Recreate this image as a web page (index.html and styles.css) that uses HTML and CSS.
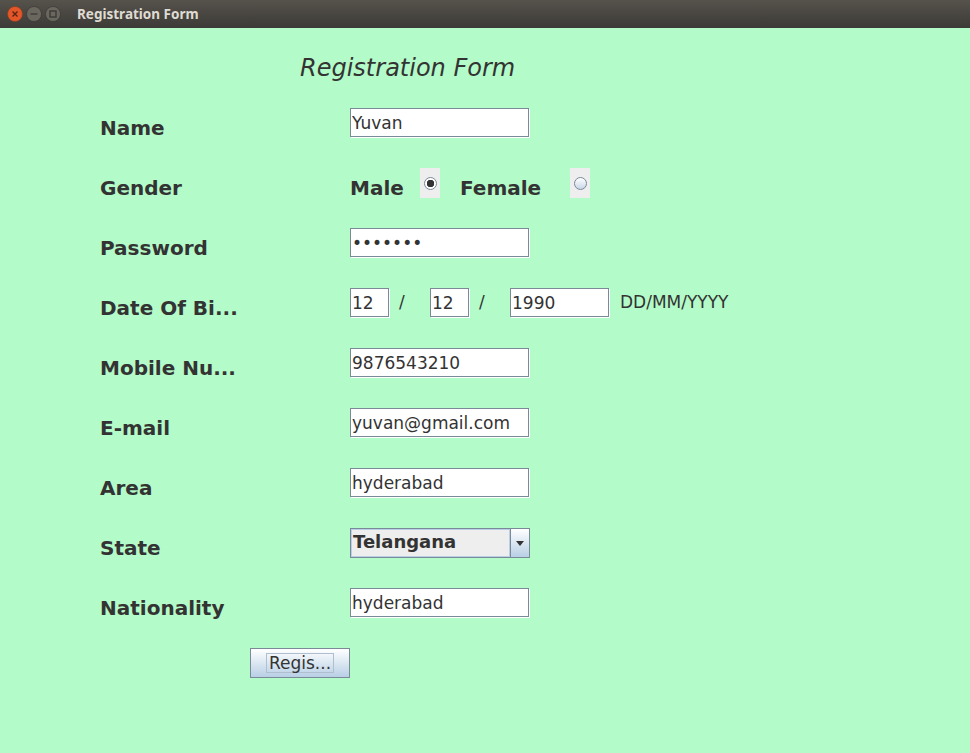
FILE: index.html
```html
<!DOCTYPE html>
<html lang="en">
<head>
    <meta charset="UTF-8">
    <title>Registration Form</title>
    <link rel="stylesheet" href="styles.css">
</head>
<body>
    <div class="titlebar">
        <div class="win-buttons">
            <svg class="win-btn" viewBox="0 0 16 16">
                <circle class="btn-close" cx="8" cy="8" r="7.5"/>
                <path class="btn-mark-dark" d="M5.5 5.5l5 5M10.5 5.5l-5 5"/>
            </svg>
            <svg class="win-btn" viewBox="0 0 16 16">
                <circle class="btn-idle" cx="8" cy="8" r="7.5"/>
                <path class="btn-mark" d="M4.5 8h7"/>
            </svg>
            <svg class="win-btn" viewBox="0 0 16 16">
                <circle class="btn-idle" cx="8" cy="8" r="7.5"/>
                <rect class="btn-mark" x="5" y="5" width="6" height="6"/>
            </svg>
        </div>
        <span class="window-title">Registration Form</span>
    </div>

    <form class="form">
        <h1 class="form-title">Registration Form</h1>

        <label class="label">Name</label>
        <input class="field" type="text" value="Yuvan">

        <label class="label">Gender</label>
        <div class="gender">
            <span class="label gender-male">Male</span>
            <span class="radio-box"><span class="radio checked"></span></span>
            <span class="label gender-female">Female</span>
            <span class="radio-box"><span class="radio"></span></span>
        </div>

        <label class="label">Password</label>
        <input class="field" type="password" value="1234567">

        <label class="label">Date Of Bi...</label>
        <div class="dob">
            <input class="field field-day" type="text" value="12">
            <span class="slash">/</span>
            <input class="field field-day" type="text" value="12">
            <span class="slash">/</span>
            <input class="field field-year" type="text" value="1990">
            <span class="hint">DD/MM/YYYY</span>
        </div>

        <label class="label">Mobile Nu...</label>
        <input class="field" type="text" value="9876543210">

        <label class="label">E-mail</label>
        <input class="field" type="text" value="yuvan@gmail.com">

        <label class="label">Area</label>
        <input class="field" type="text" value="hyderabad">

        <label class="label">State</label>
        <div class="combo">
            <span class="combo-value">Telangana</span>
            <span class="combo-arrow"></span>
        </div>

        <label class="label">Nationality</label>
        <input class="field" type="text" value="hyderabad">

        <div class="actions">
            <button class="submit" type="button"><span class="submit-text">Regis...</span></button>
        </div>
    </form>
</body>
</html>
```

FILE: styles.css
```css
* {
    box-sizing: border-box;
}

body {
    margin: 0;
    height: 753px;
    overflow: hidden;
    background-color: #b3fbc8;
    color: #333333;
    font-family: "DejaVu Sans", sans-serif;
}

/* window chrome */
.titlebar {
    display: flex;
    align-items: center;
    height: 28px;
    padding-left: 7px;
    background: linear-gradient(#56524c, #3c3b37);
}

.win-buttons {
    display: flex;
    gap: 3px;
}

.win-btn {
    width: 16px;
    height: 16px;
}

.btn-close {
    fill: #e2562a;
    stroke: #8a3c20;
    stroke-width: 0.6;
}

.btn-idle {
    fill: #6a675f;
    stroke: #35342f;
    stroke-width: 0.6;
}

.btn-mark {
    fill: none;
    stroke: #3c3b37;
    stroke-width: 1.4;
}

.btn-mark-dark {
    fill: none;
    stroke: #5a2412;
    stroke-width: 1.4;
}

.window-title {
    margin-left: 16px;
    color: #dfdbd2;
    font-family: "Noto Sans", sans-serif;
    font-size: 13.5px;
    font-weight: bold;
}

/* form */
.form {
    display: grid;
    grid-template-columns: 250px 1fr;
    grid-auto-rows: 60px;
    padding: 10px 0 0 100px;
}

.form-title {
    grid-column: 1 / 3;
    align-self: center;
    margin: 0 0 0 200px;
    font-size: 24px;
    font-weight: normal;
    font-style: italic;
}

.label {
    align-self: center;
    font-size: 20px;
    font-weight: bold;
}

.field {
    width: 179px;
    height: 29px;
    margin-top: 10px;
    padding: 0 1px;
    border: 1px solid #7a8a99;
    border-radius: 0;
    box-shadow: 1px 1px 0 #ffffff;
    outline: none;
    background-color: #ffffff;
    color: #333333;
    font-family: inherit;
    font-size: 17px;
}

/* gender row */
.gender {
    display: flex;
}

.gender-male {
    width: 70px;
}

.gender-female {
    width: 110px;
    margin-left: 20px;
}

.radio-box {
    display: flex;
    align-items: center;
    justify-content: center;
    width: 20px;
    height: 30px;
    margin-top: 10px;
    background-color: #eeeeee;
}

.radio {
    width: 13px;
    height: 13px;
    border: 1px solid #7a8a99;
    border-radius: 50%;
    background: linear-gradient(#ffffff, #c8d6e6);
}

.radio.checked {
    background: radial-gradient(circle, #333333 0 3.5px, #ffffff 4px);
}

/* date of birth row */
.dob {
    display: flex;
    align-items: flex-start;
}

.field-day {
    width: 39px;
}

.field-year {
    width: 99px;
}

.field-day,
.field-year {
    flex-shrink: 0;
}

.slash {
    width: 41px;
    margin-top: 10px;
    padding-left: 10px;
    font-size: 17px;
    line-height: 29px;
}

.field-year + .hint {
    margin: 10px 0 0 11px;
    font-size: 17px;
    line-height: 29px;
}

/* state dropdown */
.combo {
    display: flex;
    width: 180px;
    height: 30px;
    margin-top: 10px;
    border: 1px solid #7a8a99;
    background-color: #eeeeee;
}

.combo-value {
    flex: 1;
    padding-left: 1px;
    border: 1px solid #b8cfe5;
    border-width: 1px 1px 1px 1px;
    font-size: 18px;
    font-weight: bold;
    line-height: 24px;
}

.combo-arrow {
    position: relative;
    width: 19px;
    border-left: 1px solid #7a8a99;
    background: linear-gradient(#ffffff, #b8cfe5);
}

.combo-arrow::after {
    content: "";
    position: absolute;
    left: 5px;
    top: 12px;
    border: 4px solid transparent;
    border-top: 5px solid #333333;
    border-bottom: 0;
}

/* submit */
.actions {
    grid-column: 1 / 3;
    margin-left: 150px;
}

.submit {
    display: flex;
    align-items: center;
    justify-content: center;
    width: 100px;
    height: 30px;
    margin-top: 10px;
    padding: 0;
    border: 1px solid #7a8a99;
    background: linear-gradient(#ffffff, #b8cfe5);
    color: #333333;
    font-family: inherit;
    font-size: 17px;
}

.submit-text {
    width: 68px;
    border: 1px solid #b0bfd0;
    line-height: 18px;
}
```
